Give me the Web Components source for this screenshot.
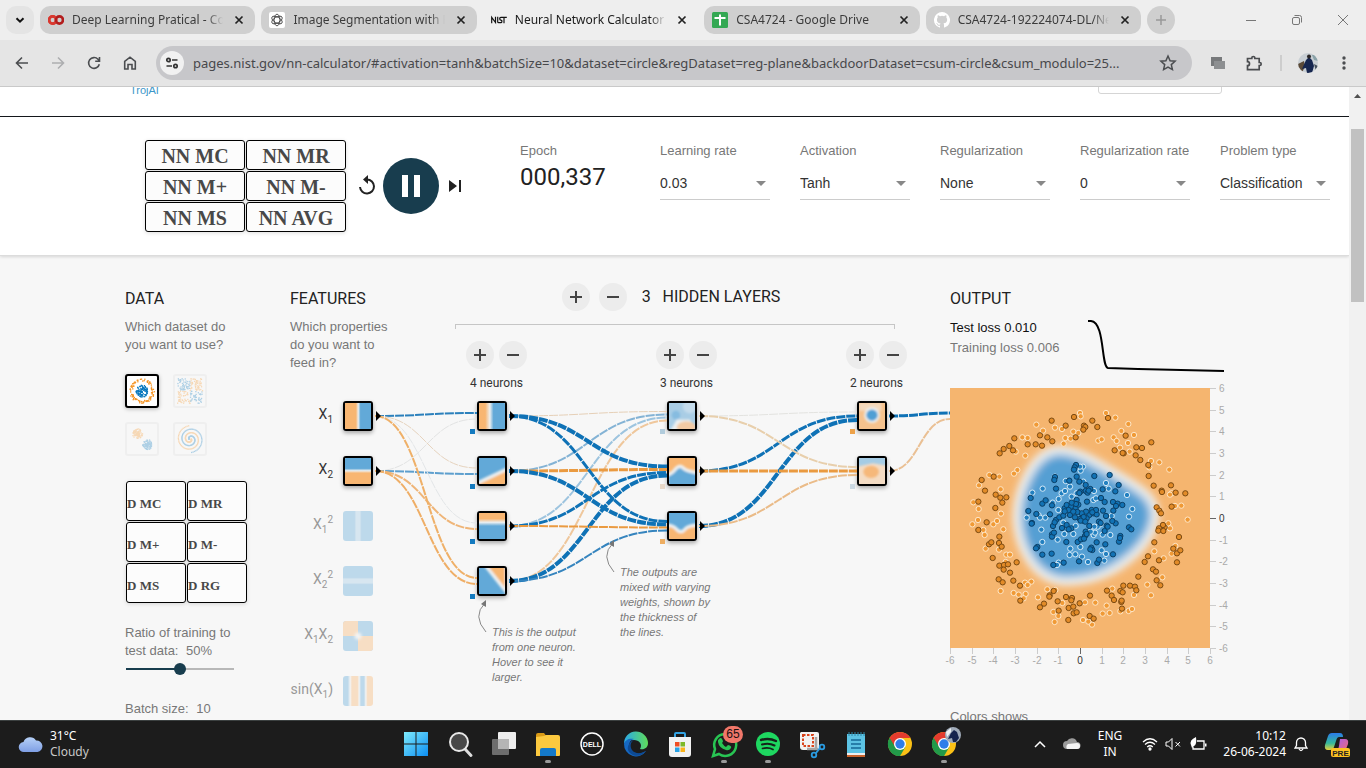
<!DOCTYPE html>
<html lang="en">
<head>
<meta charset="utf-8">
<title>Neural Network Calculator</title>
<style>
html, body { margin: 0; height: 100%; }
body { font-family: "Liberation Sans", Arial, sans-serif; font-size: 13px; overflow: hidden; }
</style>
</head>
<body>
<app-desktop></app-desktop>

<script>
const define = (name, html, setup) => {
  const template = document.createElement('template');
  template.innerHTML = html;
  customElements.define(name, class extends HTMLElement {
    connectedCallback() {
      if (this.shadowRoot) return;
      this.attachShadow({ mode: 'open' }).append(template.content.cloneNode(true));
      if (setup) setup.call(this, this.shadowRoot);
    }
  });
};

/* Small seeded generator so the datasets look the same on every load. */
const seeded = seed => () => {
  seed = (seed * 1664525 + 1013904223) % 4294967296;
  return seed / 4294967296;
};

/* ---------- browser chrome ---------- */

define('browser-tab', `
<style>
:host { display: flex; flex: 1 1 0; min-width: 0; align-items: center; gap: 8px; height: 28px; padding: 0 8px;
  box-sizing: border-box; border-radius: 10px; background: #cfcfcf; color: #3c3c3c; font-size: 12px; }
:host([active]) { background: none; color: #1b1b1b; }
::slotted(svg) { width: 16px; height: 16px; flex: none; }
.title { flex: 1; min-width: 0; overflow: hidden; white-space: nowrap; line-height: 20px;
  -webkit-mask-image: linear-gradient(to left, transparent, #000 16px); mask-image: linear-gradient(to left, transparent, #000 16px); }
button { flex: none; width: 16px; height: 16px; padding: 0; border: 0; background: none; color: #222; display: grid; place-items: center; }
</style>
<slot name="icon"></slot><span class="title"><slot></slot></span>
<button aria-label="Close tab"><svg width="10" height="10" viewBox="0 0 10 10"><path d="M1.5 1.5l7 7M8.500 1.500l-7 7" stroke="currentColor" stroke-width="1.700"/></svg></button>`);

define('browser-window', `
<style>
:host { display: block; font-family: "Noto Sans", "Open Sans", sans-serif; }
button { border: 0; padding: 0; background: none; display: grid; place-items: center; color: #4b4d50; flex: none; }
.strip { display: flex; align-items: center; gap: 6px; height: 40px; padding-left: 6px; background: #eeeeee; }
.search { width: 28px; height: 28px; border-radius: 10px; background: #e4e4e4; color: #111; }
.plus { width: 28px; height: 28px; border-radius: 14px; background: #cfcfcf; color: #999; }
.controls { display: flex; margin-left: 47px; }
.controls button { width: 46px; height: 40px; color: #777; }
.bar { display: flex; align-items: center; height: 46px; padding: 0 4px; background: #e5e5e5; border-bottom: 1px solid #c9c9c9; }
.nav { width: 36px; height: 36px; }
.omni { flex: 1; min-width: 0; display: flex; align-items: center; height: 34px; margin: 0 8px; padding: 0 15px 0 4px; box-sizing: border-box;
  border-radius: 17px; background: #c7c7ca; }
.site { width: 24px; height: 24px; border-radius: 12px; background: #f1f1f1; color: #333; }
input { flex: 1; min-width: 0; height: 26px; margin-left: 9px; padding: 0; border: 0; outline: 0; background: none; color: #47484b;
  font: 13px "Noto Sans", sans-serif; }
.div { width: 2px; height: 16px; background: #cdcdcd; margin: 0 8px; }
.avatar { border-radius: 10px; overflow: hidden; }
</style>
<div class="strip">
  <button class="search" aria-label="Search tabs"><svg width="12" height="12" viewBox="0 0 12 12"><path d="M2.500 4.200L6 7.700l3.500-3.500" fill="none" stroke="currentColor" stroke-width="2"/></svg></button>
  <browser-tab><svg slot="icon" viewBox="0 0 16 16"><g fill="none" stroke-width="2.700"><circle cx="4.600" cy="8" r="3.600" stroke="#e0453a"/><circle cx="11.400" cy="8" r="3.600" stroke="#b31d1d"/><path d="M7.500 5.700a3.600 3.600 0 1 0 0 4.600" stroke="#d8382f"/></g></svg>Deep Learning Pratical - Colab</browser-tab>
  <browser-tab><svg slot="icon" viewBox="0 0 16 16"><rect width="16" height="16" rx="2" fill="#fff"/><g fill="none" stroke="#333" stroke-width=".8"><ellipse cx="8" cy="8" rx="2.900" ry="5.800"/><ellipse cx="8" cy="8" rx="2.900" ry="5.800" transform="rotate(60 8 8)"/><ellipse cx="8" cy="8" rx="2.900" ry="5.800" transform="rotate(120 8 8)"/></g></svg>Image Segmentation with Python</browser-tab>
  <browser-tab active><svg slot="icon" viewBox="0 0 16 16"><g fill="none" stroke="#111" stroke-width="1.200"><path d="M.7 11.300V5.300l3.800 5.200V4.700M6.700 4.700v5q0 1 1 1h2.100q1.100 0 1.100-1.300T9.800 8.100q-1.100 0-1.100-1.400 0-1.300 1.300-1.300h5.800M13 5.500v5.800"/></g></svg>Neural Network Calculator - NIST</browser-tab>
  <browser-tab><svg slot="icon" viewBox="0 0 16 16"><rect width="16" height="16" rx="1.500" fill="#34a853"/><path d="M7 2.500h2V5h4.500v2H9v6.500H7V7H2.500V5H7z" fill="#fff"/></svg>CSA4724 - Google Drive</browser-tab>
  <browser-tab><svg slot="icon" viewBox="0 0 16 16"><path fill="#fff" d="M8 0a8 8 0 0 0-2.530 15.590c.4.070.55-.17.55-.38v-1.490c-2.230.48-2.700-.95-2.700-.95-.36-.92-.89-1.170-.89-1.170-.73-.5.060-.49.060-.49.800.060 1.230.830 1.230.830.710 1.220 1.870.870 2.330.660.070-.52.280-.87.510-1.070-1.780-.2-3.640-.89-3.640-3.950 0-.87.310-1.590.820-2.150-.08-.2-.36-1.020.080-2.120 0 0 .67-.21 2.200.820a7.600 7.600 0 0 1 4 0c1.530-1.040 2.200-.82 2.200-.82.440 1.100.160 1.920.080 2.120.510.560.820 1.270.820 2.150 0 3.070-1.870 3.750-3.650 3.950.290.250.540.730.540 1.480v2.200c0 .21.150.460.550.380A8 8 0 0 0 8 0z"/></svg>CSA4724-192224074-DL/Neural</browser-tab>
  <button class="plus" aria-label="New tab"><svg width="12" height="12" viewBox="0 0 12 12"><path d="M6 1v10M1 6h10" stroke="currentColor" stroke-width="1.500"/></svg></button>
  <div class="controls">
    <button aria-label="Minimise"><svg width="12" height="12"><path d="M1 6.500h10" stroke="currentColor"/></svg></button>
    <button aria-label="Restore"><svg width="12" height="12" fill="none" stroke="currentColor"><rect x="1.500" y="3.500" width="7" height="7" rx="1.500"/><path d="M3.500 1.500h5a2 2 0 0 1 2 2v5"/></svg></button>
    <button aria-label="Close"><svg width="12" height="12"><path d="M1 1l10 10M11 1L1 11" stroke="currentColor"/></svg></button>
  </div>
</div>
<div class="bar">
  <button class="nav" aria-label="Back"><svg width="16" height="16" viewBox="0 0 16 16"><path d="M14 8H3M8 2.500L2.500 8 8 13.500" fill="none" stroke="currentColor" stroke-width="1.600"/></svg></button>
  <button class="nav" aria-label="Forward" style="color:#adaeb0"><svg width="16" height="16" viewBox="0 0 16 16"><path d="M2 8h11M8 2.500L13.500 8 8 13.500" fill="none" stroke="currentColor" stroke-width="1.600"/></svg></button>
  <button class="nav" aria-label="Reload"><svg width="16" height="16" viewBox="0 0 16 16"><path d="M13.300 9.200A5.400 5.400 0 1 1 12 4.300l1.300 1.500M13.500 2v4.200H9.200" fill="none" stroke="currentColor" stroke-width="1.600"/></svg></button>
  <button class="nav" aria-label="Home"><svg width="16" height="16" viewBox="0 0 16 16"><path d="M2.700 14V6.500L8 2.200l5.300 4.300V14H10V9.500H6V14z" fill="none" stroke="currentColor" stroke-width="1.600"/></svg></button>
  <div class="omni">
    <button class="site" aria-label="Site information"><svg width="14" height="14" viewBox="0 0 14 14" fill="none" stroke="currentColor" stroke-width="1.700"><circle cx="3.500" cy="4" r="1.700"/><path d="M7 4h5.500M1.500 10H7"/><circle cx="10.500" cy="10" r="1.700"/></svg></button>
    <input aria-label="Address" value="pages.nist.gov/nn-calculator/#activation=tanh&amp;batchSize=10&amp;dataset=circle&amp;regDataset=reg-plane&amp;backdoorDataset=csum-circle&amp;csum_modulo=25...">
    <button aria-label="Bookmark"><svg width="18" height="18" viewBox="0 0 18 18"><path d="M9 2l2.100 4.700 5 .5-3.800 3.400 1.100 5L9 13l-4.400 2.600 1.100-5L1.900 7.200l5-.5z" fill="none" stroke="currentColor" stroke-width="1.500"/></svg></button>
  </div>
  <button class="nav" aria-label="Media extension"><svg width="16" height="16" viewBox="0 0 16 16"><path d="M1 2h11v9H1z" fill="#77797b"/><path d="M4 6h11v8H4z" fill="#8d8f91"/></svg></button>
  <button class="nav" aria-label="Extensions"><svg width="18" height="18" viewBox="0 0 18 18"><path d="M2.500 4.500h4.300V4a1.500 1.500 0 0 1 3 0v.5h4.400v4h.5a1.500 1.500 0 0 1 0 3h-.5v4.200H2.500v-4a2 2 0 0 0 0-4z" fill="none" stroke="currentColor" stroke-width="1.700"/></svg></button>
  <span class="div"></span>
  <button class="nav" aria-label="Profile"><svg class="avatar" width="20" height="20" viewBox="0 0 20 20"><rect width="20" height="20" fill="#c9cfd4"/><path d="M0 11l6-3 1 5-3 7H0z" fill="#5b4a38"/><path d="M8 7l3-3 3 3 2 6-2 7H9l-1-5-4 1z" fill="#16264f"/><circle cx="11" cy="3.500" r="2" fill="#2a2627"/><path d="M14 2h6v6l-4-1z" fill="#8aa2a8"/><path d="M16 11l4 2-2 5z" fill="#44505c"/></svg></button>
  <button class="nav" aria-label="Menu"><svg width="4" height="16"><g fill="currentColor"><circle cx="2" cy="3" r="1.700"/><circle cx="2" cy="8" r="1.700"/><circle cx="2" cy="13" r="1.700"/></g></svg></button>
</div>`);

/* ---------- form parts ---------- */

define('labelled-select', `
<style>
:host { display: block; flex: none; width: 110px; }
label { display: block; line-height: 18px; color: #777; }
.field { display: grid; align-items: center; margin-top: 7px; border-bottom: 1px solid #ccc; }
select { grid-area: 1 / 1; appearance: none; height: 32px; width: 100%; padding: 0; border: 0; background: none; color: #333;
  font: 14px "Liberation Sans", Arial, sans-serif; }
svg { grid-area: 1 / 1; justify-self: end; margin-right: 4px; pointer-events: none; }
</style>
<label for="s"></label>
<div class="field"><select id="s"></select><svg width="10" height="5"><path d="M0 0h10L5 5z" fill="#888"/></svg></div>`,
function (root) {
  root.querySelector('label').textContent = this.getAttribute('label');
  root.querySelector('select').append(new Option(this.getAttribute('value')));
});

define('round-button', `
<style>
:host { display: block; flex: none; }
button { display: grid; place-items: center; width: 28px; height: 28px; padding: 0; border: 0; border-radius: 14px; background: #ececec; color: #444; }
</style>
<button><svg width="14" height="14"><path stroke="currentColor" stroke-width="2"/></svg></button>`,
function (root) {
  const add = this.hasAttribute('add');
  root.querySelector('path').setAttribute('d', add ? 'M7 1v12M1 7h12' : 'M1 7h12');
  root.querySelector('button').setAttribute('aria-label', add ? 'Add' : 'Remove');
});

define('calc-keys', `
<style>
:host { display: grid; grid-template-columns: repeat(2, var(--key-width)); grid-auto-rows: var(--key-height); gap: 1px; width: max-content; }
button { box-sizing: border-box; padding: var(--key-padding); border: 1px solid #000; border-radius: 3px; background: #fcfcfc; color: #484848;
  text-align: var(--key-align); font: bold var(--key-size) "Liberation Serif", "Times New Roman", serif; box-shadow: 0 1px 4px #0002; }
</style>`,
function (root) {
  for (const name of this.getAttribute('keys').split(',')) {
    const key = document.createElement('button');
    key.textContent = name;
    root.append(key);
  }
});

/* ---------- thumbnails ---------- */

const B = '#62a9d8', O = '#f8b672', W = '#eceff0';
const bands = (vertical, stops) => `<linearGradient id="g" x1="0" y1="0" x2="${vertical ? 0 : 1}" y2="${vertical ? 1 : 0}">` +
  stops.map(([at, colour]) => `<stop offset="${at}%" stop-color="${colour}"/>`).join('') + `</linearGradient><rect width="30" height="30" fill="url(#g)"/>`;
const soft = (base, body) => `<rect width="30" height="30" fill="${base}"/><g filter="url(#b)">${body}</g>`;
const HEAT = {
  x1: bands(false, [[42, O], [51, W], [60, B]]),
  x2: bands(true, [[40, B], [49, W], [58, O]]),
  x1sq: bands(false, [[38, B], [44, '#a5cce6'], [56, '#a5cce6'], [62, B]]),
  x2sq: bands(true, [[38, B], [44, '#a5cce6'], [56, '#a5cce6'], [62, B]]),
  x1x2: `<rect width="30" height="30" fill="${B}"/><path d="M0 0h15v30h15V15H0z" fill="${O}"/><circle cx="15" cy="15" r="3.500" fill="${W}" filter="url(#b)"/>`,
  sin: bands(false, [[0, B], [16, B], [24, W], [30, O], [48, O], [54, W], [60, B], [70, B], [76, W], [82, O], [100, O]]),
  n1: bands(false, [[24, O], [42, W], [56, B]]),
  n2: soft(B, `<path d="M-4 30L36 11v25H-4z" fill="${O}" stroke="${W}" stroke-width="4"/>`),
  n3: bands(true, [[22, O], [36, W], [50, B]]),
  n4: soft(B, `<path d="M5-6l27 34V-6z" fill="${O}" stroke="${W}" stroke-width="4"/>`),
  m1: soft('#a9cde5', `<circle cx="8" cy="14" r="5" fill="#86bce0"/><circle cx="24" cy="4" r="8" fill="#c5dcec"/><path d="M0 34l9-15h15l8 15z" fill="${W}"/><ellipse cx="20" cy="28" rx="11" ry="7" fill="#f2caa4"/>`),
  m2: soft(O, `<path d="M-3 20q7-2 11-8 5-5 9 0 5 4 17 5v20H-3z" fill="${B}" stroke="${W}" stroke-width="4"/>`),
  m3: soft(B, `<path d="M-3 14q8 0 12 5 5 5 9 0 4-5 16-5v20H-3z" fill="${O}" stroke="${W}" stroke-width="4"/>`),
  p1: soft('#f5c28d', `<rect x="0" y="0" width="26" height="9" fill="#f3d9bd"/><circle cx="15" cy="14" r="9" fill="${W}"/><circle cx="15" cy="14" r="6.500" fill="#4f9fd4"/>`),
  p2: soft('#f4dcc4', `<path d="M-3-3h36v12l-17-3-19 4z" fill="#a5cce5"/><ellipse cx="14" cy="16" rx="9" ry="7" fill="#f6b87a"/>`)
};
define('heat-thumb', `
<style>
:host { display: block; flex: none; box-sizing: border-box; width: 30px; height: 30px; border: 2px solid #000; border-radius: 3px; overflow: hidden; box-shadow: 0 2px 4px #0005; }
:host([off]) { border: 0; box-shadow: none; opacity: .38; }
svg { display: block; width: 100%; height: 100%; }
</style>
<svg viewBox="0 0 30 30" preserveAspectRatio="none" aria-hidden="true"></svg>`,
function (root) {
  root.querySelector('svg').innerHTML = '<filter id="b" x="-30%" y="-30%" width="160%" height="160%"><feGaussianBlur stdDeviation="1.500"/></filter>' + HEAT[this.getAttribute('kind')];
});

define('dataset-thumb', `
<style>
:host { display: block; }
button { display: block; box-sizing: border-box; width: 34px; height: 34px; padding: 0; border: 2px solid #ddd; border-radius: 3px; background: #fafafa; opacity: .3; }
:host([selected]) button { border-color: #000; background: #fff; opacity: 1; box-shadow: 0 1px 4px #0004; }
svg { display: block; }
</style>
<button><svg width="30" height="30"></svg></button>`,
function (root) {
  const kind = this.getAttribute('kind'), r = seeded(7), out = [];
  const dot = (x, y, blue) => out.push(`<rect x="${x.toFixed(1)}" y="${y.toFixed(1)}" width="1.300" height="1.300" fill="${blue ? '#0877bd' : '#f59322'}"/>`);
  const polar = (cx, cy, d, a) => [cx + d * Math.cos(a), cy + d * Math.sin(a)];
  for (let i = 0; i < 190; i++) {
    const blue = i % 2, a = r() * 6.283;
    if (kind === 'circle') dot(...polar(14.5, 14.5, blue ? Math.sqrt(r()) * 6 : 9.5 + r() * 2.8, a), blue);
    if (kind === 'xor') { const x = 2 + r() * 25, y = 2 + r() * 25; dot(x, y, (x < 14.5) === (y < 14.5)); }
    if (kind === 'gauss') dot(...(blue ? polar(20, 20, r() * 5, a) : polar(10, 9, r() * 5, a)), blue);
    if (kind === 'spiral') { const t = (i >> 1) / 95; dot(...polar(14.5, 14.5, t * 12.5 + 1, t * 11 + (blue ? 3.1416 : 0)), blue); }
  }
  root.querySelector('svg').innerHTML = out.join('');
  root.querySelector('button').setAttribute('aria-label', kind + ' dataset');
});

/* ---------- output plot: 780 x 780 units over 260 px ---------- */

const POINTS = {
  light: `450,399 528,399 452,409 556,413 595,432 319,434 375,443 339,452 396,447 430,455 445,459 574,453 277,472 293,474 406,474 422,476 401,491 551,472 560,483 612,465 594,489 505,482 515,478 286,527 262,570 252,581 257,515 599,515 570,503 663,543 658,562 688,547 718,569 147,616 178,585 208,590 212,628 130,667 146,687 213,701 201,723 144,720 127,733 190,733 220,748 160,750 164,765 207,809 167,806 229,824 240,824 227,846 212,933 251,939 266,944 287,942 304,905 285,908 293,915 281,955 324,952 352,928 376,930 397,969 370,996 374,1026 385,1008 459,1020 465,967 496,968 530,977 539,999 518,1001 486,1034 475,1025 547,926 571,994 596,993 606,987 612,945 652,914 663,946 697,892 701,835 673,814 736,798 720,745 715,730 725,640 754,677 735,678 773,719 720,644 725,821`,
  dark: `432,411 365,422 407,437 487,422 534,414 502,441 462,437 466,441 460,449 437,472 253,475 330,466 352,472 367,484 293,493 317,493 336,497 238,498 221,507 209,520 249,511 587,467 664,487 619,502 636,504 554,511 581,520 617,526 631,540 655,555 656,588 671,617 723,616 695,632 737,638 766,640 725,680 680,682 688,692 693,700 155,600 191,590 165,632 145,665 197,644 211,653 229,652 217,668 196,684 170,727 145,750 208,770 177,793 184,787 207,789 215,800 188,834 208,857 222,855 234,853 260,847 221,869 240,878 206,898 218,907 250,902 270,917 271,962 371,933 359,946 342,971 330,982 383,964 408,951 426,954 424,961 386,992 416,984 430,980 449,970 431,1000 440,997 415,1020 480,947 479,1008 491,1016 531,932 545,947 552,960 580,917 600,917 615,920 619,931 571,933 578,937 574,966 576,986 625,890 644,846 654,829 673,787 687,841 669,868 678,875 680,901 691,916 741,847 741,820 751,811 730,806 747,771 704,742 699,735 687,745 685,752 700,753 696,636 358,950 575,962 578,519`,
  blueLight: `459,560 452,572 338,626 307,638 528,609 536,626 591,645 607,687 597,710 290,713 334,749 346,713 386,657 395,640 405,633 420,620 407,603 490,660 492,633 430,762 403,762 383,779 337,786 421,806 451,801 419,825 436,823 456,830 515,811 528,822 523,842 474,846 386,848 381,855 326,706 541,765 518,764 491,765 495,758 514,731 545,708 375,590 460,605 503,740 493,740 385,690 425,650 440,640 368,668 400,728 437,738 482,755 330,713 498,655 450,560`,
  blueDark: `438,555 434,562 432,569 440,590 448,605 375,591 373,600 418,602 378,626 493,588 539,585 566,615 556,634 467,615 481,627 467,633 451,635 473,638 518,628 513,654 524,666 549,666 563,671 577,675 558,678 550,692 519,692 528,708 302,654 295,693 306,729 319,702 337,671 347,661 366,676 360,703 322,801 318,805 337,824 365,821 370,855 401,848 447,844 502,849 507,839 549,823 567,785 571,768 526,793 500,787 484,803 487,810 597,742 604,748 557,730 547,723 530,737 524,753 533,740 378,720 369,738 388,712 400,707 396,744 410,735 424,745 416,748 366,763 366,770 372,758 409,786 443,786 453,778 465,768 467,755 470,762 462,776 478,738 462,723 450,717 435,712 420,705 404,685 410,675 424,680 437,684 445,674 440,660 471,665 485,690 490,700 478,705 468,695 500,703 507,725 455,700 416,690 470,715 498,690 461,711 442,696 452,722 430,695 487,697 466,725 404,694 374,727 512,729 438,672 425,668 481,808 570,774 448,639 476,632 305,731`
};
define('scatter-plot', `
<style>
:host { display: block; }
svg { display: block; overflow: visible; }
text { font: 10px "Liberation Sans", Arial, sans-serif; fill: #aaa; }
text.zero { fill: #333; }
</style>
<svg width="274" height="282" role="img" aria-label="Output heat map">
  <defs><filter id="edge" x="-20%" y="-20%" width="140%" height="140%"><feGaussianBlur stdDeviation="4"/></filter><clipPath id="c"><rect width="260" height="260"/></clipPath></defs>
  <rect width="260" height="260" fill="#f5b56f"/>
  <g clip-path="url(#c)" stroke-linejoin="round">
    <path id="halo" filter="url(#edge)" fill="#f3e3d2" stroke="#f3e3d2" stroke-width="12" d="M108 64C126 63 148 78 170 91C192 104 205 112 203 130C200 152 180 170 160 181C142 190 128 192 112 191C86 188 71 160 69 132C68 105 84 66 108 64Z"/>
    <path filter="url(#edge)" fill="#549fd3" stroke="#e3edf4" stroke-width="6" d="M108 64C126 63 148 78 170 91C192 104 205 112 203 130C200 152 180 170 160 181C142 190 128 192 112 191C86 188 71 160 69 132C68 105 84 66 108 64Z"/>
  </g>
  <g id="dots" transform="scale(.3333) translate(-60 -324)"></g>
  <g id="axes"></g>
</svg>`,
function (root) {
  const styles = { light: ['#f09a36', '#fde6c8', 8], dark: ['#e28b28', '#7a4a12', 8], blueLight: ['#2280c0', '#d5e9f6', 8], blueDark: ['#1272b4', '#0b3f66', 8] };
  root.querySelector('#dots').innerHTML = Object.entries(styles).map(([name, [fill, stroke, r]]) =>
    `<g fill="${fill}" stroke="${stroke}" stroke-width="3">` + POINTS[name].trim().split(/\s+/).map(p => {
      const [x, y] = p.split(',');
      return `<circle cx="${x}" cy="${y}" r="${r}"/>`;
    }).join('') + '</g>').join('');
  let axes = '';
  for (let v = -6; v <= 6; v++) {
    const at = Math.round((v + 6) * 260 / 12), c = v ? '' : ' class="zero"', s = v ? '#ccc' : '#666';
    axes += `<path d="M${at}.5 260v6M260 ${260 - at}.5h6" stroke="${s}"/><text${c} x="${at}" y="276" text-anchor="middle">${v}</text><text${c} x="269" y="${264 - at}">${v}</text>`;
  }
  root.querySelector('#axes').innerHTML = axes;
});

/* ---------- training controls ---------- */

define('training-controls', `
<style>
:host { display: block; background: #fff; border-bottom: 1px solid #dcdcdc; box-shadow: 0 1px 3px #0002; position: relative; }
.row { display: flex; box-sizing: border-box; max-width: 1099px; height: 138px; margin: 0 auto; padding: 23px 0 0 20px; }
calc-keys { --key-width: 100px; --key-height: 30px; --key-size: 20px; --key-align: center; --key-padding: 2px 0 0; flex: none; }
.run { display: flex; flex: none; align-items: center; gap: 6px; height: 92px; margin-left: 11px; }
button { display: grid; place-items: center; padding: 0; border: 0; background: none; color: #222; width: 20px; height: 28px; }
.play { width: 56px; height: 56px; border-radius: 28px; background: #183d4e; color: #fff; }
.epoch { flex: none; width: 140px; margin-left: 55px; line-height: 18px; color: #777; }
.epoch output { display: block; margin-top: 3px; color: #222; font: 24px/28px Roboto, sans-serif; }
.fields { display: flex; gap: 30px; }
.epoch, .fields { margin-top: 2px; }
</style>
<div class="row">
  <calc-keys keys="NN MC,NN MR,NN M+,NN M-,NN MS,NN AVG"></calc-keys>
  <div class="run">
    <button aria-label="Reset"><svg width="20" height="22" viewBox="0 0 20 22"><path d="M3 12a7 7 0 1 0 7-7.500" fill="none" stroke="currentColor" stroke-width="2"/><path d="M11 0v9L6 4.500z" fill="currentColor"/></svg></button>
    <button class="play" aria-label="Pause"><svg width="20" height="22"><path d="M1 0h6v22H1zM13 0h6v22h-6z" fill="currentColor"/></svg></button>
    <button aria-label="Step"><svg width="14" height="12"><path d="M1 0l8 6-8 6zM11 0h2v12h-2z" fill="currentColor"/></svg></button>
  </div>
  <div class="epoch">Epoch<output>000,337</output></div>
  <div class="fields">
    <labelled-select label="Learning rate" value="0.03"></labelled-select>
    <labelled-select label="Activation" value="Tanh"></labelled-select>
    <labelled-select label="Regularization" value="None"></labelled-select>
    <labelled-select label="Regularization rate" value="0"></labelled-select>
    <labelled-select label="Problem type" value="Classification"></labelled-select>
  </div>
</div>`);

/* ---------- playground ---------- */

const BLUE = '#0f72b6', ORANGE = '#ea9a40';
/* [from, to, colour, width] in the order the inputs enter each neuron. */
const LINKS = [
  ['f0', 'a0', '#2b80bc', 2], ['f1', 'a0', '#e2e3e3', 1],
  ['f0', 'a1', '#e6d3be', 1], ['f1', 'a1', '#5d9fce', 2],
  ['f0', 'a2', '#e3e6e8', 1], ['f1', 'a2', '#efb578', 2],
  ['f0', 'a3', '#efb068', 2], ['f1', 'a3', '#efae66', 2],
  ['a0', 'b0', '#e6d0b7', 1], ['a1', 'b0', '#84b3d5', 2], ['a2', 'b0', '#9dc4df', 2], ['a3', 'b0', '#efc79c', 2],
  ['a0', 'b1', BLUE, 4], ['a1', 'b1', ORANGE, 3], ['a2', 'b1', BLUE, 3], ['a3', 'b1', BLUE, 4],
  ['a0', 'b2', BLUE, 3], ['a1', 'b2', BLUE, 4], ['a2', 'b2', ORANGE, 2], ['a3', 'b2', '#3584be', 2],
  ['b0', 'c0', '#e3e3e0', 1], ['b1', 'c0', BLUE, 3], ['b2', 'c0', BLUE, 4],
  ['b0', 'c1', '#e8cfac', 2], ['b1', 'c1', ORANGE, 3], ['b2', 'c1', '#eabb88', 2],
  ['c0', 'out', BLUE, 3], ['c1', 'out', '#eac094', 2]
];
const BIAS = { a0: '#147abf', a1: '#147abf', a2: '#147abf', a3: '#147abf', b0: '#b2ccdc', b1: '#e8d8c8', b2: '#eeae62', c0: '#eda24a', c1: '#cbd8e2' };

define('nn-playground', `
<style>
:host { display: block; background: #f7f7f7; color: #777; line-height: 18px; }
.page { position: relative; display: grid; grid-template-columns: 110px 110px 1fr 274px; column-gap: 55px; max-width: 1099px; margin: 0 auto; padding-top: 33px; }
h2 { margin: 0 0 9px; font: 16px/20px Roboto, sans-serif; color: #222; text-transform: uppercase; white-space: nowrap; }
p { margin: 0; white-space: nowrap; }
.sets { display: grid; grid-template-columns: 34px 34px; gap: 14px; margin-top: 20px; }
.data calc-keys { --key-width: 60px; --key-height: 40px; --key-size: 13px; --key-align: left; --key-padding: 5px 0 0; margin: 25px 0 21px 1px; }
label { display: block; white-space: nowrap; }
label b { font-weight: normal; margin-left: 4px; }
input { appearance: none; display: block; width: 108px; height: 18px; margin: 0 1px 22px; background: linear-gradient(to right, #183d4e 50%, #b8b8b8 50%) center / 100% 2px no-repeat; }
input::-webkit-slider-thumb { appearance: none; width: 12px; height: 12px; border-radius: 6px; background: #183d4e; }
.rows { display: grid; gap: 25px; margin-top: 29px; }
.feature { display: flex; align-items: center; gap: 10px; height: 30px; }
.feature span { width: 43px; padding-bottom: 4px; text-align: right; white-space: nowrap; font: 14px/16px Roboto, sans-serif; color: #333; }
.feature span.off { color: #999; }
sub, sup { font-size: 10px; line-height: 0; }
.layers-title { display: flex; align-items: center; justify-content: center; gap: 9px; height: 28px; margin: -6px 8px 0 0; }
.layers-title h2 { margin: 0 0 0 6px; }
.layers-title h2 b { font-weight: normal; margin-right: 8px; }
.bracket { height: 4px; margin-top: 13px; border: 1px solid #c6c6c6; border-bottom: 0; }
.layers { display: flex; justify-content: space-between; margin: 12px -12px 0 11px; }
.layer { width: 61px; }
.layer header { display: flex; gap: 5px; }
.layer p { margin: 6px 0 10px; text-align: center; font: 12px/16px Roboto, sans-serif; color: #333; }
.nodes { display: grid; gap: 25px; width: 30px; margin-left: 11px; }
.losses { display: flex; justify-content: space-between; height: 54px; margin-bottom: 16px; }
.losses div { font: 13px/20px "Liberation Sans", Arial, sans-serif; white-space: nowrap; }
.losses svg { width: 138px; height: 54px; }
.test { color: #111; }
.output > p { margin-top: 38px; }
.links { position: absolute; inset: 0; width: 100%; height: 100%; overflow: visible; pointer-events: none; }
.note { position: absolute; font: italic 11px/15px "Liberation Sans", Arial, sans-serif; }
.note svg { position: absolute; left: -16px; top: -29px; overflow: visible; }
</style>
<main class="page">
  <section class="data">
    <h2>Data</h2>
    <p>Which dataset do<br>you want to use?</p>
    <div class="sets">
      <dataset-thumb kind="circle" selected></dataset-thumb><dataset-thumb kind="xor"></dataset-thumb>
      <dataset-thumb kind="gauss"></dataset-thumb><dataset-thumb kind="spiral"></dataset-thumb>
    </div>
    <calc-keys keys="D MC,D MR,D M+,D M-,D MS,D RG"></calc-keys>
    <label for="ratio">Ratio of training to<br>test data: <b>50%</b></label>
    <input id="ratio" type="range" value="50">
    <label for="batch">Batch size: <b>10</b></label>
    <input id="batch" type="range" value="30" min="1">
  </section>
  <section>
    <h2>Features</h2>
    <p>Which properties<br>do you want to<br>feed in?</p>
    <div class="rows">
      <div class="feature"><span>X<sub>1</sub></span><heat-thumb kind="x1" data-node="f0"></heat-thumb></div>
      <div class="feature"><span>X<sub>2</sub></span><heat-thumb kind="x2" data-node="f1"></heat-thumb></div>
      <div class="feature"><span class="off">X<sub>1</sub><sup>2</sup></span><heat-thumb kind="x1sq" off></heat-thumb></div>
      <div class="feature"><span class="off">X<sub>2</sub><sup>2</sup></span><heat-thumb kind="x2sq" off></heat-thumb></div>
      <div class="feature"><span class="off">X<sub>1</sub>X<sub>2</sub></span><heat-thumb kind="x1x2" off></heat-thumb></div>
      <div class="feature"><span class="off">sin(X<sub>1</sub>)</span><heat-thumb kind="sin" off></heat-thumb></div>
    </div>
  </section>
  <section>
    <div class="layers-title"><round-button add></round-button><round-button></round-button><h2><b>3</b> Hidden layers</h2></div>
    <div class="bracket"></div>
    <div class="layers">
      <div class="layer"><header><round-button add></round-button><round-button></round-button></header><p>4 neurons</p>
        <div class="nodes"><heat-thumb kind="n1" data-node="a0"></heat-thumb><heat-thumb kind="n2" data-node="a1"></heat-thumb><heat-thumb kind="n3" data-node="a2"></heat-thumb><heat-thumb kind="n4" data-node="a3"></heat-thumb></div></div>
      <div class="layer"><header><round-button add></round-button><round-button></round-button></header><p>3 neurons</p>
        <div class="nodes"><heat-thumb kind="m1" data-node="b0"></heat-thumb><heat-thumb kind="m2" data-node="b1"></heat-thumb><heat-thumb kind="m3" data-node="b2"></heat-thumb></div></div>
      <div class="layer"><header><round-button add></round-button><round-button></round-button></header><p>2 neurons</p>
        <div class="nodes"><heat-thumb kind="p1" data-node="c0"></heat-thumb><heat-thumb kind="p2" data-node="c1"></heat-thumb></div></div>
    </div>
  </section>
  <section class="output">
    <h2>Output</h2>
    <div class="losses">
      <div><span class="test">Test loss 0.010</span><br>Training loss 0.006</div>
      <svg viewBox="0 0 138 54" aria-hidden="true"><path d="M2 3h3c14 1 10 46 17 47l30 1 86 2" fill="none" stroke="#000" stroke-width="2"/></svg>
    </div>
    <scatter-plot></scatter-plot>
    <p>Colors shows</p>
  </section>
  <svg class="links" aria-hidden="true"></svg>
  <div class="note" style="left:367px;top:369px">This is the output<br>from one neuron.<br>Hover to see it<br>larger.<svg width="16" height="36"><path d="M10 36Q-4 20 9 7" fill="none" stroke="#888"/><path d="M10 4v7l-5-3z" fill="#777"/></svg></div>
  <div class="note" style="left:495px;top:309px">The outputs are<br>mixed with varying<br>weights, shown by<br>the thickness of<br>the lines.<svg width="16" height="36"><path d="M10 36Q-4 20 9 7" fill="none" stroke="#888"/><path d="M10 4v7l-5-3z" fill="#777"/></svg></div>
</main>`,
function (root) {
  const page = root.querySelector('.page'), svg = root.querySelector('.links');
  const draw = () => {
    const origin = page.getBoundingClientRect(), at = {};
    for (const node of root.querySelectorAll('[data-node]')) {
      const r = node.getBoundingClientRect();
      at[node.dataset.node] = { left: r.left - origin.left, right: r.right - origin.left, y: r.top - origin.top + 15 };
    }
    at.out = { left: root.querySelector('scatter-plot').getBoundingClientRect().left - origin.left, y: at.c0.y };
    let out = '';
    for (const link of LINKS) {
      const [from, to, colour, width] = link, inputs = LINKS.filter(l => l[1] === to);
      const x1 = at[from].right + 2, y1 = at[from].y, x2 = at[to].left, mid = (x1 + x2) / 2;
      const y2 = at[to].y + (inputs.indexOf(link) - (inputs.length - 1) / 2) / inputs.length * 12;
      out += `<path d="M${x1} ${y1}C${mid} ${y1} ${mid} ${y2} ${x2} ${y2}" fill="none" stroke="${colour}" stroke-width="${width}" stroke-dasharray="9 1"/>`;
    }
    for (const name in at) if (name !== 'out') out += `<path d="M${at[name].right + 3} ${at[name].y - 5}l5 5-5 5z"/>`;
    for (const name in BIAS) out += `<rect x="${at[name].left - 7}" y="${at[name].y + 13}" width="5" height="5" fill="${BIAS[name]}"/>`;
    svg.innerHTML = out;
  };
  draw();
  new ResizeObserver(draw).observe(page);
});

define('nist-page', `
<style>
:host { display: flex; min-height: 0; background: #f7f7f7; }
.content { flex: 1; min-width: 0; overflow: hidden; }
.masthead { background: #fff; border-bottom: 1px solid #15181c; }
.masthead div { display: flex; align-items: flex-end; justify-content: space-between; box-sizing: border-box; max-width: 1099px; height: 29px; margin: 0 auto; padding: 0 2px 22px 5px; overflow: hidden; }
a { color: #3d97c9; text-decoration: none; font-size: 11px; line-height: 12px; margin-bottom: -2px; }
.masthead button { flex: none; width: 124px; height: 30px; border: 1px solid #d5d5d5; border-radius: 3px; background: #fff; }
.scroll { flex: none; width: 17px; box-sizing: border-box; padding: 5px 2px 0; background: #f1f1f1; text-align: center; }
.scroll i { display: block; height: 173px; margin-top: 28px; background: #c1c1c1; }
.scroll svg { display: block; margin: 0 auto; }
</style>
<div class="content">
  <header class="masthead"><div><a href="#">TrojAI</a><button aria-label="Page options"></button></div></header>
  <training-controls></training-controls>
  <nn-playground></nn-playground>
</div>
<div class="scroll" aria-hidden="true"><svg width="9" height="9"><path d="M1 6h7L4.500 2z" fill="#505050"/></svg><i></i></div>`);

/* ---------- task bar ---------- */

define('task-icon', `
<style>
:host { display: block; flex: none; }
button { position: relative; display: grid; place-items: center; width: 44px; height: 48px; padding: 0; border: 0; background: none; }
:host([running]) button::after { content: ""; position: absolute; left: 19px; bottom: 5px; width: 6px; height: 3px; border-radius: 2px; background: #9a9a9a; }
::slotted(svg) { width: 26px; height: 26px; display: block; overflow: visible; }
::slotted(span) { position: absolute; left: 21px; top: 6px; width: 20px; height: 17px; border-radius: 9px; background: #f0776a; color: #201010; font-size: 12px; line-height: 17px; }
</style>
<button><slot></slot></button>`,
function (root) { root.querySelector('button').setAttribute('aria-label', this.getAttribute('label')); });

const chromeLogo = '<circle cx="13" cy="13" r="12" fill="#fbc116"/><path d="M13 13L2.600 7A12 12 0 0 1 23.400 7H13z" fill="#e33b2e"/><path d="M2.600 7a12 12 0 0 0 10.400 18l5.200-9z" fill="#229a49"/><path d="M2.600 7L8 16l5-3 0-6z" fill="#e33b2e"/><path d="M13 25l5.200-9L23.400 7H13v6z" fill="#fbc116"/><path d="M2.600 7A12 12 0 0 0 13 25l5.200-9L8 16z" fill="#229a49"/><circle cx="13" cy="13" r="6" fill="#fff"/><circle cx="13" cy="13" r="4.700" fill="#2f7de9"/>';

define('task-bar', `
<style>
:host { display: grid; grid-template-columns: 1fr auto 1fr; align-items: center; box-sizing: border-box; height: 48px; padding-right: 6px; border-top: 1px solid #3b4040;
  background: #1c1c1c; color: #fff; font: 12px/16px "Noto Sans", sans-serif; }
.weather, .apps, .tray { display: flex; align-items: center; height: 46px; align-self: start; }
.weather { gap: 7px; padding-left: 18px; }
.weather small { display: block; font-size: 12px; color: #c8c8c8; }
.tray { justify-content: flex-end; padding-right: 10px; white-space: nowrap; }
.tray svg { flex: none; }
.lang { margin: 0 20px 0 17px; text-align: center; }
.clock { margin: 0 7px 0 16px; text-align: right; }
</style>
<div class="weather"><svg width="25" height="18" viewBox="0 0 25 18"><linearGradient id="w" x2="0" y2="1"><stop stop-color="#b5d0f7"/><stop offset="1" stop-color="#7f9fe4"/></linearGradient><path d="M6 17a5 5 0 0 1-.5-10A7 7 0 0 1 18 5.500a5.800 5.800 0 0 1 1.500 11.500z" fill="url(#w)"/></svg><div>31°C<small>Cloudy</small></div></div>
<div class="apps">
  <task-icon label="Start"><svg viewBox="0 0 26 26"><linearGradient id="a" x2="1" y2="1"><stop stop-color="#7eeafc"/><stop offset="1" stop-color="#0c8ef2"/></linearGradient><path d="M1 1h11.500v11.500H1zM13.500 1H25v11.500H13.500zM1 13.500h11.500V25H1zM13.500 13.500H25V25H13.500z" fill="url(#a)"/></svg></task-icon>
  <task-icon label="Search"><svg viewBox="0 0 26 26"><path d="M18 18l6 6.500" stroke="#ddd" stroke-width="3" stroke-linecap="round"/><circle cx="12" cy="11" r="9" fill="#484848" stroke="#e8e8e8" stroke-width="2"/></svg></task-icon>
  <task-icon label="Task view"><svg viewBox="0 0 26 26"><rect x="7" y="1" width="18" height="17" rx="1" fill="#eee"/><rect x="1" y="8" width="17" height="16" rx="1" fill="#777" fill-opacity=".9"/><path d="M7 8h11v10H7z" fill="#b5b5b5"/></svg></task-icon>
  <task-icon label="File Explorer" running><svg viewBox="0 0 26 26"><path d="M1 4q0-2 2-2h6l3 4h-11z" fill="#d99a16"/><path d="M1 6l8-1 2-1h12q2 0 2 2v18q0 1-1 1H1z" fill="#fcc93f"/><path d="M5 25v-6q0-2 2-2h12q2 0 2 2v6z" fill="#1479c9"/></svg></task-icon>
  <task-icon label="Dell"><svg viewBox="0 0 26 26"><circle cx="13" cy="13" r="11" fill="none" stroke="#fff" stroke-width="1.500"/><text x="13" y="16" text-anchor="middle" fill="#fff" font-size="7" font-weight="bold" font-family="Liberation Sans, sans-serif">DELL</text></svg></task-icon>
  <task-icon label="Edge"><svg viewBox="0 0 26 26"><linearGradient id="e" x2="1"><stop stop-color="#2aa8e8"/><stop offset="1" stop-color="#5fdc5a"/></linearGradient><path d="M1 13a12 12 0 0 1 24-1c0 5-4 7-8 6 3-5-1-9-6-9-5 0-9 2-10 4z" fill="url(#e)"/><path d="M1 13c1-4 5-6 10-5-4 1-6 5-4 10 2 4 7 6 12 4 2-1 3-2 4-2A12 12 0 0 1 1 13z" fill="#1668c1"/><path d="M11 9c-4 2-4 7-2 10 3 4 9 4 14 1-5 7-15 6-18-1-1-4 2-9 6-10z" fill="#0d4a94"/></svg></task-icon>
  <task-icon label="Store"><svg viewBox="0 0 26 26"><path d="M8 7V3q0-1 1-1h8q1 0 1 1v4" fill="none" stroke="#34a3e3" stroke-width="2"/><path d="M2 6h22v17q0 3-3 3H5q-3 0-3-3z" fill="#f2f2f2"/><path d="M8 11h4.500v4.500H8z" fill="#f04e23"/><path d="M13.500 11H18v4.500h-4.500z" fill="#7db928"/><path d="M8 16.500h4.500V21H8z" fill="#27a2e6"/><path d="M13.500 16.500H18V21h-4.500z" fill="#fbb41b"/></svg></task-icon>
  <task-icon label="WhatsApp" running><svg viewBox="0 0 26 26"><path d="M2 25l2-7a11 11 0 1 1 4 5z" fill="none" stroke="#28c553" stroke-width="2.500"/><path d="M8 8q2-2 3 0l1 2q0 1-1 2 2 3 4 4l2-2q4 1 3 3-2 3-5 2-7-2-8-8-.5-2 1-3z" fill="#28c553"/></svg><span>65</span></task-icon>
  <task-icon label="Spotify" running><svg viewBox="0 0 26 26"><circle cx="13" cy="13" r="12" fill="#1ed760"/><g fill="none" stroke="#15221a" stroke-linecap="round"><path d="M6 9q8-2.500 15 1" stroke-width="2.400"/><path d="M7 13.500q7-2 12.500 1" stroke-width="2"/><path d="M7.500 17.500q6-1.500 10.500 1" stroke-width="1.700"/></g></svg></task-icon>
  <task-icon label="Snipping Tool"><svg viewBox="0 0 26 26"><path d="M2 1h16q2 0 2 2v16H4q-3 0-3-3V2z" fill="#f2f2f2"/><path d="M4 4h10v11H4z" fill="none" stroke="#d9441c" stroke-width="2" stroke-dasharray="2.500 1.500"/><path d="M17 6v13M8 18h11" stroke="#a5a5a5" stroke-width="2.500"/><circle cx="23" cy="16" r="2.300" fill="none" stroke="#2a9be0" stroke-width="1.800"/><circle cx="15" cy="24" r="2.300" fill="none" stroke="#2a9be0" stroke-width="1.800"/><path d="M17 22l4-5" stroke="#2a9be0" stroke-width="2"/></svg></task-icon>
  <task-icon label="Notepad"><svg viewBox="0 0 26 26"><path d="M4 22h18v4H4z" fill="#c8622b"/><path d="M4 3h18v20H4z" fill="#5cc3e4"/><path d="M4 22h18v2H4z" fill="#eee"/><path d="M6 1v4M9 1v4M12 1v4M15 1v4M18 1v4M21 1v4" stroke="#2d87a8"/><path d="M8 9h10M8 13h10M8 17h10" stroke="#146a96" stroke-width="1.500"/></svg></task-icon>
  <task-icon label="Chrome"><svg viewBox="0 0 26 26">${chromeLogo}</svg></task-icon>
  <task-icon label="Chrome profile" running><svg viewBox="0 0 26 26">${chromeLogo}<circle cx="22" cy="4" r="8" fill="#9faab8"/><path d="M20 2l3-3 3 2 2 6-3 4h-3l-1-4-4 1z" fill="#15244d"/><path d="M15 1l5-4v4l-4 5z" fill="#eef1f3"/></svg></task-icon>
</div>
<div class="tray">
  <svg width="12" height="8"><path d="M1 7l5-5 5 5" fill="none" stroke="#fff" stroke-width="1.500"/></svg>
  <svg width="18" height="12" viewBox="0 0 18 12" style="margin-left:17px"><path d="M4 11a4 4 0 0 1 0-8A5.500 5.500 0 0 1 14 4a3.500 3.500 0 0 1 0 7z" fill="#9b9b9b"/><path d="M4 11a3.500 3.500 0 0 1 1-5l9-1a3 3 0 0 1 0 6z" fill="#f4f4f4"/></svg>
  <div class="lang">ENG<br>IN</div>
  <svg width="16" height="14" viewBox="0 0 16 14" fill="none" stroke="#fff" stroke-width="1.300"><path d="M1 5q7-6.500 14 0M3 7.500q5-4.500 10 0M5.200 10q2.800-2.500 5.600 0"/><circle cx="8" cy="12" r="1" fill="#fff"/></svg>
  <svg width="16" height="14" viewBox="0 0 16 14" fill="none" stroke="#fff" style="margin-left:7px"><path d="M1 5h2.500l3.500-3.500v11L3.500 9H1zM10.500 5l4.500 4.500M15 5l-4.500 4.500"/></svg>
  <svg width="18" height="16" viewBox="0 0 18 16" style="margin-left:8px"><path d="M8 5h7v8H4v-2" fill="none" stroke="#fff" stroke-width="1.300"/><path d="M16 7.500h1.500v3H16z" fill="#fff"/><path d="M2 9Q0 4 7 1q1 8-2 9l-2 2z" fill="#fff"/></svg>
  <div class="clock">10:12<br>26-06-2024</div>
  <svg width="16" height="16" viewBox="0 0 16 16" fill="none" stroke="#fff" stroke-width="1.300"><path d="M2 12h12l-1.500-2.500V6.500a4.500 4.500 0 0 0-9 0v3zM6 13q2 3 4 0"/></svg>
  <svg width="26" height="26" viewBox="0 0 26 26" style="margin-left:15px"><linearGradient id="k" x2="0" y2="1"><stop stop-color="#2a7bea"/><stop offset=".6" stop-color="#35b89a"/><stop offset="1" stop-color="#e8d13c"/></linearGradient><linearGradient id="l" x2="1" y2="1"><stop stop-color="#a55df0"/><stop offset="1" stop-color="#f36c6a"/></linearGradient><path d="M8 2h8q3 0 3 4h-4q-2 0-3 4l-2 6q-1 3-4 3H4q-4 0-3-5l3-9q1-3 4-3z" fill="url(#k)"/><path d="M16 8h5q4 0 3 5l-2 5q-1 3-4 3h-6q2-1 3-6z" fill="url(#l)"/><rect x="7" y="17" width="19" height="9" rx="2" fill="#fcc021"/><text x="16.500" y="24.500" text-anchor="middle" font-size="8" font-weight="bold" font-family="Liberation Sans, sans-serif" fill="#222">PRE</text></svg>
</div>`);

define('app-desktop', `
<style>
:host { display: flex; flex-direction: column; height: 100vh; }
browser-window, task-bar { flex: none; }
nist-page { flex: 1; }
</style>
<browser-window></browser-window>
<nist-page></nist-page>
<task-bar></task-bar>`);
</script>
</body>
</html>
